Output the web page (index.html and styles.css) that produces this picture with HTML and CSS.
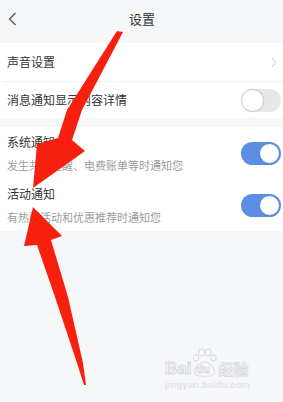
FILE: index.html
```html
<!DOCTYPE html>
<html lang="zh">
<head>
<meta charset="utf-8">
<link rel="stylesheet" href="styles.css">
</head>
<body>
<div class="page">
  <header class="topbar">
    <div class="back">
      <svg width="9" height="14" viewBox="0 0 9 14"><path d="M7.5 1 L1.5 7 L7.5 13" fill="none" stroke="#555" stroke-width="1.3"/></svg>
    </div>
    <div class="title">设置</div>
    <div></div>
  </header>

  <section class="group g1">
    <div class="row r1">
      <span class="label">声音设置</span>
      <svg class="chev" width="6" height="11" viewBox="0 0 6 11"><path d="M1 1 L5 5.5 L1 10" fill="none" stroke="#c4c4c4" stroke-width="0.9"/></svg>
    </div>
    <div class="divider"></div>
    <div class="row r2">
      <span class="label">消息通知显示内容详情</span>
      <span class="toggle off"><span class="knob"></span></span>
    </div>
  </section>

  <section class="group g2">
    <div class="row r3">
      <div class="texts">
        <div class="label">系统通知</div>
        <div class="sub">发生共享提醒、电费账单等时通知您</div>
      </div>
      <span class="toggle on"><span class="knob"></span></span>
    </div>
    <div class="row r3">
      <div class="texts">
        <div class="label">活动通知</div>
        <div class="sub">有热门活动和优惠推荐时通知您</div>
      </div>
      <span class="toggle on"><span class="knob"></span></span>
    </div>
  </section>

  <div class="watermark">
    <div class="wm-line">
      <span class="wm-bai">Bai</span>
      <span class="paw">
        <svg width="25" height="30" viewBox="0 0 25 30">
          <g fill="#f7f8fa" stroke="#dcdee1" stroke-width="1.2">
            <ellipse cx="4" cy="10" rx="2.6" ry="3.2"/>
            <ellipse cx="9.5" cy="4.5" rx="2.8" ry="3.4"/>
            <ellipse cx="16" cy="4.5" rx="2.8" ry="3.4"/>
            <ellipse cx="21.5" cy="10" rx="2.6" ry="3.2"/>
            <path d="M3 26 C1 20 8 14 12.5 14 C17 14 24 20 22 26 C20 29 5 29 3 26 Z"/>
          </g>
        </svg>
        <span class="wm-du">du</span>
      </span>
      <span class="wm-jy">经验</span>
    </div>
    <div class="wm-url">jingyan.baidu.com</div>
  </div>

  <svg class="arrows" width="283" height="402" viewBox="0 0 283 402">
    <polygon fill="#f7200f" points="117,31 123,32 82,110 72,140 85,151 33,188 37,144 58,138 67,110"/>
    <polygon fill="#f7200f" points="33,207 62,236 51,240 68,297 83,363 86,385 84,385 77,363 55,297 37,245 24,246"/>
  </svg>
</div>
</body>
</html>
```
FILE: styles.css
```css
html, body {
  margin: 0;
  padding: 0;
}
body {
  background: #f6f7f9;
  font-family: "Noto Sans CJK SC", "Noto Sans", sans-serif;
  color: #333;
}
.page {
  position: relative;
  width: 283px;
  height: 402px;
  overflow: hidden;
  background: #f6f7f9;
}
.topbar {
  height: 43px;
  display: grid;
  grid-template-columns: 1fr auto 1fr;
  align-items: center;
}
.back {
  padding-left: 8px;
  display: flex;
  align-items: center;
  height: 14px;
  margin-top: -5px;
}
.title {
  font-size: 13px;
  line-height: 18px;
  color: #333;
  margin-top: -5px;
  padding-left: 1px;
}
.group {
  background: #fff;
}
.g2 {
  margin-top: 9px;
}
.row {
  display: flex;
  align-items: center;
  justify-content: space-between;
  padding-left: 7px;
  padding-right: 2px;
}
.r1 {
  height: 38px;
  padding-right: 6px;
}
.r2 {
  height: 36px;
}
.r3 {
  height: 52px;
}
.divider {
  height: 1px;
  background: #eeeff1;
  margin-left: 3px;
}
.label {
  font-size: 12px;
  line-height: 18px;
  color: #333;
}
.texts {
  display: flex;
  flex-direction: column;
  gap: 6px;
  margin-top: -1px;
}
.sub {
  font-size: 11px;
  line-height: 16px;
  color: #9c9c9c;
}
.toggle {
  width: 40px;
  height: 23px;
  border-radius: 12px;
  display: flex;
  align-items: center;
  box-sizing: border-box;
  padding: 1px;
}
.toggle .knob {
  width: 21px;
  height: 21px;
  border-radius: 50%;
  background: #fff;
  box-sizing: border-box;
}
.toggle.off {
  background: #e8e8ea;
  justify-content: flex-start;
}
.toggle.off .knob {
  box-shadow: 0 0 1px 1px rgba(0,0,0,0.12);
}
.toggle.on {
  background: #5b8ee4;
  justify-content: flex-end;
}
.toggle.on .knob {
  border: 1px solid #4e82da;
}
.watermark {
  position: absolute;
  left: 165px;
  top: 346px;
  width: 92px;
  font-family: "Liberation Sans", Arial, sans-serif;
}
.wm-line {
  display: flex;
  align-items: flex-end;
  height: 32px;
}
.wm-bai {
  font-size: 17px;
  font-weight: bold;
  line-height: 17px;
  color: #f7f8fa;
  -webkit-text-stroke: 1px #d9dbde;
  margin-bottom: 1px;
}
.paw {
  position: relative;
  width: 25px;
  height: 30px;
  margin-left: 1px;
}
.paw svg {
  display: block;
}
.wm-du {
  position: absolute;
  left: 4px;
  bottom: 3px;
  font-size: 11px;
  font-weight: bold;
  line-height: 11px;
  color: #f7f8fa;
  -webkit-text-stroke: 0.8px #d9dbde;
}
.wm-jy {
  font-family: "Noto Sans CJK SC", sans-serif;
  font-size: 15px;
  font-weight: bold;
  line-height: 17px;
  color: #f7f8fa;
  -webkit-text-stroke: 0.8px #d9dbde;
  margin-left: 1px;
  margin-bottom: 1px;
}
.wm-url {
  font-size: 9.5px;
  line-height: 11px;
  color: #e2e3e6;
  font-weight: bold;
  margin-top: 1px;
  letter-spacing: 0.1px;
}
.arrows {
  position: absolute;
  left: 0;
  top: 0;
  pointer-events: none;
}
```
